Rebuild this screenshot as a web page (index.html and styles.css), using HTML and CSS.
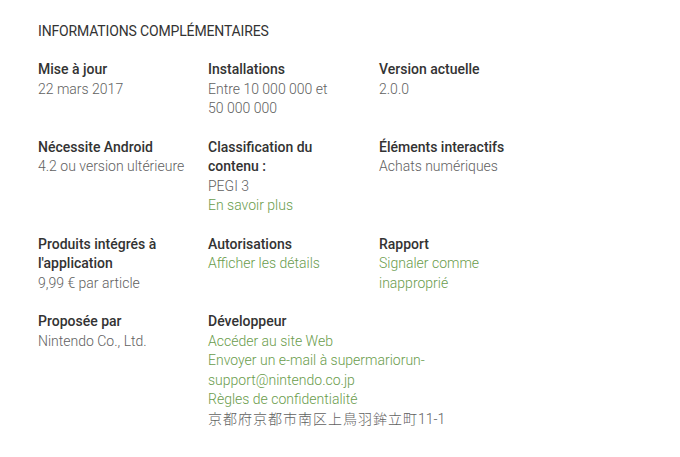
FILE: index.html
```html
<!DOCTYPE html>
<html>
  <head>
    <meta charset="utf-8">
    <link rel="stylesheet" href="styles.css">
  </head>
<body>
<div class="details">
  <h2 class="details-title">INFORMATIONS COMPLÉMENTAIRES</h2>
  <div class="details-grid">
    <div class="meta">
      <div class="meta-title">Mise à jour</div>
      <div class="meta-value">22 mars 2017</div>
    </div>
    <div class="meta">
      <div class="meta-title">Installations</div>
      <div class="meta-value">Entre 10&nbsp;000&nbsp;000 et 50&nbsp;000&nbsp;000</div>
    </div>
    <div class="meta">
      <div class="meta-title">Version actuelle</div>
      <div class="meta-value">2.0.0</div>
    </div>

    <div class="meta">
      <div class="meta-title">Nécessite Android</div>
      <div class="meta-value">4.2 ou version ultérieure</div>
    </div>
    <div class="meta">
      <div class="meta-title">Classification du contenu&nbsp;:</div>
      <div class="meta-value">PEGI 3</div>
      <a class="meta-link" href="#">En savoir plus</a>
    </div>
    <div class="meta">
      <div class="meta-title">Éléments interactifs</div>
      <div class="meta-value">Achats numériques</div>
    </div>

    <div class="meta">
      <div class="meta-title">Produits intégrés à l'application</div>
      <div class="meta-value">9,99&nbsp;€ par article</div>
    </div>
    <div class="meta">
      <div class="meta-title">Autorisations</div>
      <a class="meta-link" href="#">Afficher les détails</a>
    </div>
    <div class="meta">
      <div class="meta-title">Rapport</div>
      <a class="meta-link" href="#">Signaler comme inapproprié</a>
    </div>

    <div class="meta">
      <div class="meta-title">Proposée par</div>
      <div class="meta-value">Nintendo Co., Ltd.</div>
    </div>
    <div class="meta meta-wide">
      <div class="meta-title">Développeur</div>
      <a class="meta-link" href="#">Accéder au site Web</a>
      <a class="meta-link" href="#">Envoyer un e-mail à supermariorun-support@nintendo.co.jp</a>
      <a class="meta-link" href="#">Règles de confidentialité</a>
      <div class="meta-value"><span class="address-cjk">京都府京都市南区上鳥羽鉾立町</span>11-1</div>
    </div>
  </div>
</div>
</body>
</html>
```

FILE: styles.css
```css
* {
  box-sizing: border-box;
}

body {
  margin: 0;
  background: #fff;
  font-family: Roboto, "Noto Sans CJK JP", sans-serif;
  font-size: 14px;
  line-height: 19.5px;
}

.details {
  padding: 21px 0 0 38px;
}

.details-title {
  margin: 0 0 19px 0;
  font-size: 14px;
  font-weight: 400;
  line-height: 20px;
  letter-spacing: -0.15px;
  color: #333;
}

.details-grid {
  display: grid;
  grid-template-columns: 170px 171px 171px;
  row-gap: 19px;
}

.meta {
  padding-right: 20px;
}

.meta-wide {
  grid-column: span 2;
  padding-right: 90px;
}

.meta-title {
  font-weight: 500;
  color: #333;
}

.meta-value {
  font-weight: 300;
  color: #616161;
}

/* japanese address runs a little wider than the latin text */
.address-cjk {
  letter-spacing: 1px;
}

.meta-link {
  display: block;
  font-weight: 300;
  color: #6a9c4c;
  text-decoration: none;
}
```
